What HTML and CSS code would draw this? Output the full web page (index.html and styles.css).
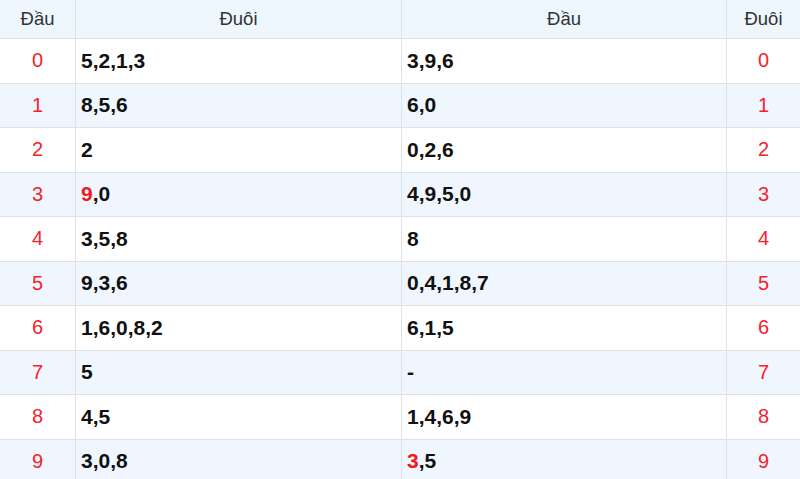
FILE: index.html
```html
<!DOCTYPE html>
<html>
<head>
<meta charset="utf-8">
<link rel="stylesheet" href="styles.css">
</head>
<body>
<table class="lt">
  <colgroup><col class="c1"><col class="c2"><col class="c3"><col class="c4"></colgroup>
  <thead>
    <tr><th>Đầu</th><th>Đuôi</th><th>Đầu</th><th>Đuôi</th></tr>
  </thead>
  <tbody>
    <tr><td class="num">0</td><td class="val">5,2,1,3</td><td class="val">3,9,6</td><td class="num">0</td></tr>
    <tr class="alt"><td class="num">1</td><td class="val">8,5,6</td><td class="val">6,0</td><td class="num">1</td></tr>
    <tr><td class="num">2</td><td class="val">2</td><td class="val">0,2,6</td><td class="num">2</td></tr>
    <tr class="alt"><td class="num">3</td><td class="val"><span class="hl">9</span>,0</td><td class="val">4,9,5,0</td><td class="num">3</td></tr>
    <tr><td class="num">4</td><td class="val">3,5,8</td><td class="val">8</td><td class="num">4</td></tr>
    <tr class="alt"><td class="num">5</td><td class="val">9,3,6</td><td class="val">0,4,1,8,7</td><td class="num">5</td></tr>
    <tr><td class="num">6</td><td class="val">1,6,0,8,2</td><td class="val">6,1,5</td><td class="num">6</td></tr>
    <tr class="alt"><td class="num">7</td><td class="val">5</td><td class="val">-</td><td class="num">7</td></tr>
    <tr><td class="num">8</td><td class="val">4,5</td><td class="val">1,4,6,9</td><td class="num">8</td></tr>
    <tr class="alt"><td class="num">9</td><td class="val">3,0,8</td><td class="val"><span class="hl">3</span>,5</td><td class="num">9</td></tr>
  </tbody>
</table>
</body>
</html>
```
FILE: styles.css
```css
html, body { margin: 0; padding: 0; background: #fff; }
body { font-family: "Liberation Sans", Arial, sans-serif; overflow: hidden; }
.lt { border-collapse: collapse; width: 801px; margin-left: -1px; table-layout: fixed; margin-top: -1px; }
.c1 { width: 76px; }
.c2 { width: 326px; }
.c3 { width: 325px; }
.c4 { width: 74px; }
.lt th, .lt td { border: 1px solid #dee2e6; padding: 0; }
.lt th { height: 38px; background: #eef6fe; font-weight: normal; font-size: 18.5px; color: #333; text-align: center; }
.lt td { height: 43.5px; }
.alt td { background: #eff6fe; }
.num { text-align: center; color: #f5222d; font-size: 20px; }
.val { text-align: left; padding-left: 5px !important; font-weight: bold; font-size: 21px; color: #111; }
.hl { color: #f01a1a; }
```
